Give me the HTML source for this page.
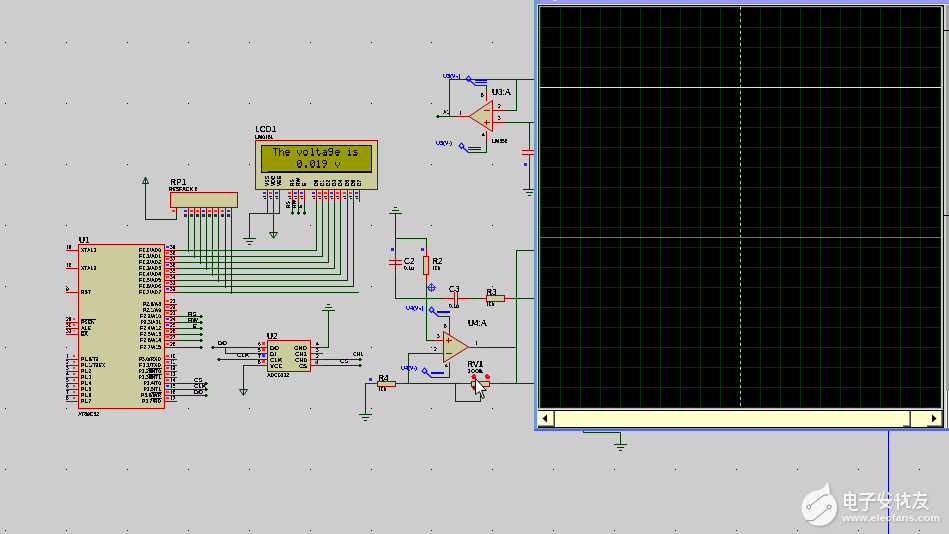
<!DOCTYPE html>
<html><head><meta charset="utf-8"><style>html,body{margin:0;padding:0;width:949px;height:534px;overflow:hidden;background:#cdcdcd;font-family:"Liberation Sans",sans-serif}</style></head>
<body><svg width="949" height="534" viewBox="0 0 949 534" style="position:absolute;left:0;top:0" font-family="Liberation Sans, sans-serif">
<defs><filter id="crisp2" x="0" y="0" width="949" height="534" filterUnits="userSpaceOnUse" color-interpolation-filters="sRGB"><feComponentTransfer><feFuncA type="discrete" tableValues="0 1 1"/></feComponentTransfer></filter><filter id="crisp" x="0" y="0" width="949" height="534" filterUnits="userSpaceOnUse" color-interpolation-filters="sRGB"><feComponentTransfer><feFuncA type="discrete" tableValues="0 0 1 1 1"/></feComponentTransfer></filter><pattern id="chk" width="2" height="2" patternUnits="userSpaceOnUse"><rect width="2" height="2" fill="#ffffff"/><rect width="1" height="1" fill="#ffffc8"/><rect x="1" y="1" width="1" height="1" fill="#ffffc8"/></pattern></defs>
<rect width="949" height="534" fill="#cdcdcd"/>
<g shape-rendering="crispEdges">
<rect x="5" y="42" width="1" height="1" fill="#101010"/>
<rect x="5" y="103" width="1" height="1" fill="#101010"/>
<rect x="5" y="164" width="1" height="1" fill="#101010"/>
<rect x="5" y="225" width="1" height="1" fill="#101010"/>
<rect x="5" y="286" width="1" height="1" fill="#101010"/>
<rect x="5" y="347" width="1" height="1" fill="#101010"/>
<rect x="5" y="408" width="1" height="1" fill="#101010"/>
<rect x="5" y="469" width="1" height="1" fill="#101010"/>
<rect x="5" y="530" width="1" height="1" fill="#101010"/>
<rect x="66" y="42" width="1" height="1" fill="#101010"/>
<rect x="66" y="103" width="1" height="1" fill="#101010"/>
<rect x="66" y="164" width="1" height="1" fill="#101010"/>
<rect x="66" y="225" width="1" height="1" fill="#101010"/>
<rect x="66" y="286" width="1" height="1" fill="#101010"/>
<rect x="66" y="347" width="1" height="1" fill="#101010"/>
<rect x="66" y="408" width="1" height="1" fill="#101010"/>
<rect x="66" y="469" width="1" height="1" fill="#101010"/>
<rect x="66" y="530" width="1" height="1" fill="#101010"/>
<rect x="127" y="42" width="1" height="1" fill="#101010"/>
<rect x="127" y="103" width="1" height="1" fill="#101010"/>
<rect x="127" y="164" width="1" height="1" fill="#101010"/>
<rect x="127" y="225" width="1" height="1" fill="#101010"/>
<rect x="127" y="286" width="1" height="1" fill="#101010"/>
<rect x="127" y="347" width="1" height="1" fill="#101010"/>
<rect x="127" y="408" width="1" height="1" fill="#101010"/>
<rect x="127" y="469" width="1" height="1" fill="#101010"/>
<rect x="127" y="530" width="1" height="1" fill="#101010"/>
<rect x="188" y="42" width="1" height="1" fill="#101010"/>
<rect x="188" y="103" width="1" height="1" fill="#101010"/>
<rect x="188" y="164" width="1" height="1" fill="#101010"/>
<rect x="188" y="225" width="1" height="1" fill="#101010"/>
<rect x="188" y="286" width="1" height="1" fill="#101010"/>
<rect x="188" y="347" width="1" height="1" fill="#101010"/>
<rect x="188" y="408" width="1" height="1" fill="#101010"/>
<rect x="188" y="469" width="1" height="1" fill="#101010"/>
<rect x="188" y="530" width="1" height="1" fill="#101010"/>
<rect x="249" y="42" width="1" height="1" fill="#101010"/>
<rect x="249" y="103" width="1" height="1" fill="#101010"/>
<rect x="249" y="164" width="1" height="1" fill="#101010"/>
<rect x="249" y="225" width="1" height="1" fill="#101010"/>
<rect x="249" y="286" width="1" height="1" fill="#101010"/>
<rect x="249" y="347" width="1" height="1" fill="#101010"/>
<rect x="249" y="408" width="1" height="1" fill="#101010"/>
<rect x="249" y="469" width="1" height="1" fill="#101010"/>
<rect x="249" y="530" width="1" height="1" fill="#101010"/>
<rect x="310" y="42" width="1" height="1" fill="#101010"/>
<rect x="310" y="103" width="1" height="1" fill="#101010"/>
<rect x="310" y="164" width="1" height="1" fill="#101010"/>
<rect x="310" y="225" width="1" height="1" fill="#101010"/>
<rect x="310" y="286" width="1" height="1" fill="#101010"/>
<rect x="310" y="347" width="1" height="1" fill="#101010"/>
<rect x="310" y="408" width="1" height="1" fill="#101010"/>
<rect x="310" y="469" width="1" height="1" fill="#101010"/>
<rect x="310" y="530" width="1" height="1" fill="#101010"/>
<rect x="371" y="42" width="1" height="1" fill="#101010"/>
<rect x="371" y="103" width="1" height="1" fill="#101010"/>
<rect x="371" y="164" width="1" height="1" fill="#101010"/>
<rect x="371" y="225" width="1" height="1" fill="#101010"/>
<rect x="371" y="286" width="1" height="1" fill="#101010"/>
<rect x="371" y="347" width="1" height="1" fill="#101010"/>
<rect x="371" y="408" width="1" height="1" fill="#101010"/>
<rect x="371" y="469" width="1" height="1" fill="#101010"/>
<rect x="371" y="530" width="1" height="1" fill="#101010"/>
<rect x="431" y="42" width="1" height="1" fill="#101010"/>
<rect x="431" y="103" width="1" height="1" fill="#101010"/>
<rect x="431" y="164" width="1" height="1" fill="#101010"/>
<rect x="431" y="225" width="1" height="1" fill="#101010"/>
<rect x="431" y="286" width="1" height="1" fill="#101010"/>
<rect x="431" y="347" width="1" height="1" fill="#101010"/>
<rect x="431" y="408" width="1" height="1" fill="#101010"/>
<rect x="431" y="469" width="1" height="1" fill="#101010"/>
<rect x="431" y="530" width="1" height="1" fill="#101010"/>
<rect x="492" y="42" width="1" height="1" fill="#101010"/>
<rect x="492" y="103" width="1" height="1" fill="#101010"/>
<rect x="492" y="164" width="1" height="1" fill="#101010"/>
<rect x="492" y="225" width="1" height="1" fill="#101010"/>
<rect x="492" y="286" width="1" height="1" fill="#101010"/>
<rect x="492" y="347" width="1" height="1" fill="#101010"/>
<rect x="492" y="408" width="1" height="1" fill="#101010"/>
<rect x="492" y="469" width="1" height="1" fill="#101010"/>
<rect x="492" y="530" width="1" height="1" fill="#101010"/>
<rect x="553" y="469" width="1" height="1" fill="#101010"/>
<rect x="553" y="530" width="1" height="1" fill="#101010"/>
<rect x="614" y="469" width="1" height="1" fill="#101010"/>
<rect x="614" y="530" width="1" height="1" fill="#101010"/>
<rect x="675" y="469" width="1" height="1" fill="#101010"/>
<rect x="675" y="530" width="1" height="1" fill="#101010"/>
<rect x="736" y="469" width="1" height="1" fill="#101010"/>
<rect x="736" y="530" width="1" height="1" fill="#101010"/>
<rect x="797" y="469" width="1" height="1" fill="#101010"/>
<rect x="797" y="530" width="1" height="1" fill="#101010"/>
<rect x="858" y="469" width="1" height="1" fill="#101010"/>
<rect x="858" y="530" width="1" height="1" fill="#101010"/>
<rect x="919" y="469" width="1" height="1" fill="#101010"/>
<rect x="919" y="530" width="1" height="1" fill="#101010"/>
<rect x="78" y="244" width="87" height="165" fill="#a80000"/>
<rect x="79" y="245" width="85" height="163" fill="#cbcb9b"/>
<rect x="66" y="250" width="12" height="1" fill="#a80000"/>
<rect x="66" y="268" width="12" height="1" fill="#a80000"/>
<rect x="66" y="292" width="12" height="1" fill="#a80000"/>
<rect x="66" y="322" width="12" height="1" fill="#a80000"/>
<rect x="73" y="318" width="2" height="2" fill="#ff2828"/>
<rect x="66" y="328" width="12" height="1" fill="#a80000"/>
<rect x="73" y="324" width="2" height="2" fill="#ff2828"/>
<rect x="66" y="334" width="12" height="1" fill="#a80000"/>
<rect x="73" y="330" width="2" height="2" fill="#a0a0a0"/>
<rect x="66" y="359" width="12" height="1" fill="#a80000"/>
<rect x="73" y="355" width="2" height="2" fill="#ff2828"/>
<rect x="66" y="365" width="12" height="1" fill="#a80000"/>
<rect x="73" y="361" width="2" height="2" fill="#ff2828"/>
<rect x="66" y="371" width="12" height="1" fill="#a80000"/>
<rect x="73" y="367" width="2" height="2" fill="#ff2828"/>
<rect x="66" y="377" width="12" height="1" fill="#a80000"/>
<rect x="73" y="373" width="2" height="2" fill="#ff2828"/>
<rect x="66" y="383" width="12" height="1" fill="#a80000"/>
<rect x="73" y="379" width="2" height="2" fill="#ff2828"/>
<rect x="66" y="389" width="12" height="1" fill="#a80000"/>
<rect x="73" y="385" width="2" height="2" fill="#ff2828"/>
<rect x="66" y="395" width="12" height="1" fill="#a80000"/>
<rect x="73" y="391" width="2" height="2" fill="#ff2828"/>
<rect x="66" y="401" width="12" height="1" fill="#a80000"/>
<rect x="73" y="397" width="2" height="2" fill="#ff2828"/>
<rect x="165" y="250" width="12" height="1" fill="#a80000"/>
<rect x="166" y="246" width="3" height="2" fill="#2828ff"/>
<rect x="165" y="256" width="12" height="1" fill="#a80000"/>
<rect x="166" y="252" width="3" height="2" fill="#ff2828"/>
<rect x="165" y="262" width="12" height="1" fill="#a80000"/>
<rect x="166" y="258" width="3" height="2" fill="#ff2828"/>
<rect x="165" y="268" width="12" height="1" fill="#a80000"/>
<rect x="166" y="264" width="3" height="2" fill="#2828ff"/>
<rect x="165" y="274" width="12" height="1" fill="#a80000"/>
<rect x="166" y="270" width="3" height="2" fill="#ff2828"/>
<rect x="165" y="280" width="12" height="1" fill="#a80000"/>
<rect x="166" y="276" width="3" height="2" fill="#ff2828"/>
<rect x="165" y="286" width="12" height="1" fill="#a80000"/>
<rect x="166" y="282" width="3" height="2" fill="#ff2828"/>
<rect x="165" y="292" width="12" height="1" fill="#a80000"/>
<rect x="166" y="288" width="3" height="2" fill="#2828ff"/>
<rect x="165" y="304" width="12" height="1" fill="#a80000"/>
<rect x="166" y="300" width="3" height="2" fill="#ff2828"/>
<rect x="165" y="310" width="12" height="1" fill="#a80000"/>
<rect x="166" y="306" width="3" height="2" fill="#ff2828"/>
<rect x="165" y="316" width="12" height="1" fill="#a80000"/>
<rect x="166" y="312" width="3" height="2" fill="#ff2828"/>
<rect x="165" y="322" width="12" height="1" fill="#a80000"/>
<rect x="166" y="318" width="3" height="2" fill="#2828ff"/>
<rect x="165" y="328" width="12" height="1" fill="#a80000"/>
<rect x="166" y="324" width="3" height="2" fill="#2828ff"/>
<rect x="165" y="334" width="12" height="1" fill="#a80000"/>
<rect x="166" y="330" width="3" height="2" fill="#ff2828"/>
<rect x="165" y="340" width="12" height="1" fill="#a80000"/>
<rect x="166" y="336" width="3" height="2" fill="#ff2828"/>
<rect x="165" y="347" width="12" height="1" fill="#a80000"/>
<rect x="166" y="343" width="3" height="2" fill="#ff2828"/>
<rect x="165" y="359" width="12" height="1" fill="#a80000"/>
<rect x="166" y="355" width="3" height="2" fill="#ff2828"/>
<rect x="165" y="365" width="12" height="1" fill="#a80000"/>
<rect x="166" y="361" width="3" height="2" fill="#ff2828"/>
<rect x="165" y="371" width="12" height="1" fill="#a80000"/>
<rect x="166" y="367" width="3" height="2" fill="#ff2828"/>
<rect x="165" y="377" width="12" height="1" fill="#a80000"/>
<rect x="166" y="373" width="3" height="2" fill="#ff2828"/>
<rect x="165" y="383" width="12" height="1" fill="#a80000"/>
<rect x="166" y="379" width="3" height="2" fill="#ff2828"/>
<rect x="165" y="389" width="12" height="1" fill="#a80000"/>
<rect x="166" y="385" width="3" height="2" fill="#2828ff"/>
<rect x="165" y="395" width="12" height="1" fill="#a80000"/>
<rect x="166" y="391" width="3" height="2" fill="#ff2828"/>
<rect x="165" y="401" width="12" height="1" fill="#a80000"/>
<rect x="166" y="397" width="3" height="2" fill="#ff2828"/>
<rect x="81" y="319" width="15" height="1" fill="#000"/>
<rect x="81" y="331" width="7" height="1" fill="#000"/>
<rect x="148" y="368" width="14" height="1" fill="#000"/>
<rect x="148" y="374" width="14" height="1" fill="#000"/>
<rect x="151" y="392" width="11" height="1" fill="#000"/>
<rect x="151" y="398" width="11" height="1" fill="#000"/>
<rect x="299" y="361" width="9" height="1" fill="#000"/>
<rect x="177" y="250" width="140" height="1" fill="#003c00"/>
<rect x="316" y="202" width="1" height="49" fill="#003c00"/>
<rect x="177" y="256" width="146" height="1" fill="#003c00"/>
<rect x="322" y="202" width="1" height="55" fill="#003c00"/>
<rect x="177" y="262" width="152" height="1" fill="#003c00"/>
<rect x="328" y="202" width="1" height="61" fill="#003c00"/>
<rect x="177" y="268" width="158" height="1" fill="#003c00"/>
<rect x="334" y="202" width="1" height="67" fill="#003c00"/>
<rect x="177" y="274" width="164" height="1" fill="#003c00"/>
<rect x="340" y="202" width="1" height="73" fill="#003c00"/>
<rect x="177" y="280" width="171" height="1" fill="#003c00"/>
<rect x="347" y="202" width="1" height="79" fill="#003c00"/>
<rect x="177" y="286" width="177" height="1" fill="#003c00"/>
<rect x="353" y="202" width="1" height="85" fill="#003c00"/>
<rect x="177" y="292" width="182" height="1" fill="#003c00"/>
<rect x="170" y="192" width="68" height="16" fill="#a80000"/>
<rect x="171" y="193" width="66" height="14" fill="#cbcb9b"/>
<rect x="188" y="208" width="1" height="6" fill="#a80000"/>
<rect x="188" y="214" width="1" height="38" fill="#003c00"/>
<rect x="184" y="210" width="3" height="2" fill="#2828ff"/>
<rect x="184" y="214" width="3" height="3" fill="#303030"/>
<rect x="194" y="208" width="1" height="6" fill="#a80000"/>
<rect x="194" y="214" width="1" height="44" fill="#003c00"/>
<rect x="190" y="210" width="3" height="2" fill="#ff2828"/>
<rect x="190" y="214" width="3" height="3" fill="#303030"/>
<rect x="200" y="208" width="1" height="6" fill="#a80000"/>
<rect x="200" y="214" width="1" height="50" fill="#003c00"/>
<rect x="196" y="210" width="3" height="2" fill="#ff2828"/>
<rect x="196" y="214" width="3" height="3" fill="#303030"/>
<rect x="206" y="208" width="1" height="6" fill="#a80000"/>
<rect x="206" y="214" width="1" height="56" fill="#003c00"/>
<rect x="202" y="210" width="3" height="2" fill="#2828ff"/>
<rect x="202" y="214" width="3" height="3" fill="#303030"/>
<rect x="212" y="208" width="1" height="6" fill="#a80000"/>
<rect x="212" y="214" width="1" height="62" fill="#003c00"/>
<rect x="208" y="210" width="3" height="2" fill="#ff2828"/>
<rect x="208" y="214" width="3" height="3" fill="#303030"/>
<rect x="218" y="208" width="1" height="6" fill="#a80000"/>
<rect x="218" y="214" width="1" height="68" fill="#003c00"/>
<rect x="214" y="210" width="3" height="2" fill="#ff2828"/>
<rect x="214" y="214" width="3" height="3" fill="#303030"/>
<rect x="225" y="208" width="1" height="6" fill="#a80000"/>
<rect x="225" y="214" width="1" height="74" fill="#003c00"/>
<rect x="221" y="210" width="3" height="2" fill="#ff2828"/>
<rect x="221" y="214" width="3" height="3" fill="#303030"/>
<rect x="231" y="208" width="1" height="6" fill="#a80000"/>
<rect x="231" y="214" width="1" height="80" fill="#003c00"/>
<rect x="227" y="210" width="3" height="2" fill="#2828ff"/>
<rect x="227" y="214" width="3" height="3" fill="#303030"/>
<rect x="176" y="208" width="1" height="6" fill="#a80000"/>
<rect x="176" y="214" width="1" height="6" fill="#003c00"/>
<rect x="145" y="219" width="32" height="1" fill="#003c00"/>
<rect x="145" y="177" width="1" height="43" fill="#003c00"/>
<polygon points="145.5,177 142.5,183.5 148.5,183.5" fill="none" stroke="#003c00" stroke-width="1" shape-rendering="geometricPrecision"/>
<rect x="172" y="210" width="3" height="2" fill="#ff2828"/>
<rect x="255" y="140" width="123" height="50" fill="#a80000"/>
<rect x="256" y="141" width="121" height="48" fill="#cbcb9b"/>
<rect x="261" y="145" width="111" height="28" fill="#000"/>
<rect x="262" y="146" width="109" height="25" fill="#999900"/>
<rect x="262" y="171" width="6" height="1" fill="#999900"/>
<rect x="273" y="148" width="1" height="1" fill="#000"/>
<rect x="274" y="148" width="1" height="1" fill="#000"/>
<rect x="275" y="148" width="1" height="1" fill="#000"/>
<rect x="276" y="148" width="1" height="1" fill="#000"/>
<rect x="277" y="148" width="1" height="1" fill="#000"/>
<rect x="275" y="149" width="1" height="1" fill="#000"/>
<rect x="275" y="150" width="1" height="1" fill="#000"/>
<rect x="275" y="151" width="1" height="1" fill="#000"/>
<rect x="275" y="152" width="1" height="1" fill="#000"/>
<rect x="275" y="153" width="1" height="1" fill="#000"/>
<rect x="275" y="154" width="1" height="2" fill="#000"/>
<rect x="279" y="148" width="1" height="1" fill="#000"/>
<rect x="279" y="149" width="1" height="1" fill="#000"/>
<rect x="279" y="150" width="1" height="1" fill="#000"/>
<rect x="281" y="150" width="1" height="1" fill="#000"/>
<rect x="282" y="150" width="1" height="1" fill="#000"/>
<rect x="279" y="151" width="1" height="1" fill="#000"/>
<rect x="280" y="151" width="1" height="1" fill="#000"/>
<rect x="283" y="151" width="1" height="1" fill="#000"/>
<rect x="279" y="152" width="1" height="1" fill="#000"/>
<rect x="283" y="152" width="1" height="1" fill="#000"/>
<rect x="279" y="153" width="1" height="1" fill="#000"/>
<rect x="283" y="153" width="1" height="1" fill="#000"/>
<rect x="279" y="154" width="1" height="2" fill="#000"/>
<rect x="283" y="154" width="1" height="2" fill="#000"/>
<rect x="286" y="150" width="1" height="1" fill="#000"/>
<rect x="287" y="150" width="1" height="1" fill="#000"/>
<rect x="288" y="150" width="1" height="1" fill="#000"/>
<rect x="285" y="151" width="1" height="1" fill="#000"/>
<rect x="289" y="151" width="1" height="1" fill="#000"/>
<rect x="285" y="152" width="1" height="1" fill="#000"/>
<rect x="286" y="152" width="1" height="1" fill="#000"/>
<rect x="287" y="152" width="1" height="1" fill="#000"/>
<rect x="288" y="152" width="1" height="1" fill="#000"/>
<rect x="289" y="152" width="1" height="1" fill="#000"/>
<rect x="285" y="153" width="1" height="1" fill="#000"/>
<rect x="286" y="154" width="1" height="2" fill="#000"/>
<rect x="287" y="154" width="1" height="2" fill="#000"/>
<rect x="288" y="154" width="1" height="2" fill="#000"/>
<rect x="297" y="150" width="1" height="1" fill="#000"/>
<rect x="301" y="150" width="1" height="1" fill="#000"/>
<rect x="297" y="151" width="1" height="1" fill="#000"/>
<rect x="301" y="151" width="1" height="1" fill="#000"/>
<rect x="297" y="152" width="1" height="1" fill="#000"/>
<rect x="301" y="152" width="1" height="1" fill="#000"/>
<rect x="298" y="153" width="1" height="1" fill="#000"/>
<rect x="300" y="153" width="1" height="1" fill="#000"/>
<rect x="299" y="154" width="1" height="2" fill="#000"/>
<rect x="304" y="150" width="1" height="1" fill="#000"/>
<rect x="305" y="150" width="1" height="1" fill="#000"/>
<rect x="306" y="150" width="1" height="1" fill="#000"/>
<rect x="303" y="151" width="1" height="1" fill="#000"/>
<rect x="307" y="151" width="1" height="1" fill="#000"/>
<rect x="303" y="152" width="1" height="1" fill="#000"/>
<rect x="307" y="152" width="1" height="1" fill="#000"/>
<rect x="303" y="153" width="1" height="1" fill="#000"/>
<rect x="307" y="153" width="1" height="1" fill="#000"/>
<rect x="304" y="154" width="1" height="2" fill="#000"/>
<rect x="305" y="154" width="1" height="2" fill="#000"/>
<rect x="306" y="154" width="1" height="2" fill="#000"/>
<rect x="311" y="148" width="1" height="1" fill="#000"/>
<rect x="312" y="148" width="1" height="1" fill="#000"/>
<rect x="312" y="149" width="1" height="1" fill="#000"/>
<rect x="312" y="150" width="1" height="1" fill="#000"/>
<rect x="312" y="151" width="1" height="1" fill="#000"/>
<rect x="312" y="152" width="1" height="1" fill="#000"/>
<rect x="312" y="153" width="1" height="1" fill="#000"/>
<rect x="311" y="154" width="1" height="2" fill="#000"/>
<rect x="312" y="154" width="1" height="2" fill="#000"/>
<rect x="313" y="154" width="1" height="2" fill="#000"/>
<rect x="317" y="148" width="1" height="1" fill="#000"/>
<rect x="317" y="149" width="1" height="1" fill="#000"/>
<rect x="316" y="150" width="1" height="1" fill="#000"/>
<rect x="317" y="150" width="1" height="1" fill="#000"/>
<rect x="318" y="150" width="1" height="1" fill="#000"/>
<rect x="317" y="151" width="1" height="1" fill="#000"/>
<rect x="317" y="152" width="1" height="1" fill="#000"/>
<rect x="317" y="153" width="1" height="1" fill="#000"/>
<rect x="320" y="153" width="1" height="1" fill="#000"/>
<rect x="318" y="154" width="1" height="2" fill="#000"/>
<rect x="319" y="154" width="1" height="2" fill="#000"/>
<rect x="323" y="150" width="1" height="1" fill="#000"/>
<rect x="324" y="150" width="1" height="1" fill="#000"/>
<rect x="325" y="150" width="1" height="1" fill="#000"/>
<rect x="326" y="151" width="1" height="1" fill="#000"/>
<rect x="323" y="152" width="1" height="1" fill="#000"/>
<rect x="324" y="152" width="1" height="1" fill="#000"/>
<rect x="325" y="152" width="1" height="1" fill="#000"/>
<rect x="326" y="152" width="1" height="1" fill="#000"/>
<rect x="322" y="153" width="1" height="1" fill="#000"/>
<rect x="326" y="153" width="1" height="1" fill="#000"/>
<rect x="323" y="154" width="1" height="2" fill="#000"/>
<rect x="324" y="154" width="1" height="2" fill="#000"/>
<rect x="325" y="154" width="1" height="2" fill="#000"/>
<rect x="326" y="154" width="1" height="2" fill="#000"/>
<rect x="329" y="148" width="1" height="1" fill="#000"/>
<rect x="330" y="148" width="1" height="1" fill="#000"/>
<rect x="331" y="148" width="1" height="1" fill="#000"/>
<rect x="332" y="148" width="1" height="1" fill="#000"/>
<rect x="328" y="149" width="1" height="1" fill="#000"/>
<rect x="332" y="149" width="1" height="1" fill="#000"/>
<rect x="328" y="150" width="1" height="1" fill="#000"/>
<rect x="332" y="150" width="1" height="1" fill="#000"/>
<rect x="329" y="151" width="1" height="1" fill="#000"/>
<rect x="330" y="151" width="1" height="1" fill="#000"/>
<rect x="331" y="151" width="1" height="1" fill="#000"/>
<rect x="332" y="151" width="1" height="1" fill="#000"/>
<rect x="332" y="152" width="1" height="1" fill="#000"/>
<rect x="332" y="153" width="1" height="1" fill="#000"/>
<rect x="329" y="154" width="1" height="2" fill="#000"/>
<rect x="330" y="154" width="1" height="2" fill="#000"/>
<rect x="331" y="154" width="1" height="2" fill="#000"/>
<rect x="336" y="150" width="1" height="1" fill="#000"/>
<rect x="337" y="150" width="1" height="1" fill="#000"/>
<rect x="338" y="150" width="1" height="1" fill="#000"/>
<rect x="335" y="151" width="1" height="1" fill="#000"/>
<rect x="339" y="151" width="1" height="1" fill="#000"/>
<rect x="335" y="152" width="1" height="1" fill="#000"/>
<rect x="336" y="152" width="1" height="1" fill="#000"/>
<rect x="337" y="152" width="1" height="1" fill="#000"/>
<rect x="338" y="152" width="1" height="1" fill="#000"/>
<rect x="339" y="152" width="1" height="1" fill="#000"/>
<rect x="335" y="153" width="1" height="1" fill="#000"/>
<rect x="336" y="154" width="1" height="2" fill="#000"/>
<rect x="337" y="154" width="1" height="2" fill="#000"/>
<rect x="338" y="154" width="1" height="2" fill="#000"/>
<rect x="349" y="148" width="1" height="1" fill="#000"/>
<rect x="348" y="150" width="1" height="1" fill="#000"/>
<rect x="349" y="150" width="1" height="1" fill="#000"/>
<rect x="349" y="151" width="1" height="1" fill="#000"/>
<rect x="349" y="152" width="1" height="1" fill="#000"/>
<rect x="349" y="153" width="1" height="1" fill="#000"/>
<rect x="348" y="154" width="1" height="2" fill="#000"/>
<rect x="349" y="154" width="1" height="2" fill="#000"/>
<rect x="350" y="154" width="1" height="2" fill="#000"/>
<rect x="354" y="150" width="1" height="1" fill="#000"/>
<rect x="355" y="150" width="1" height="1" fill="#000"/>
<rect x="356" y="150" width="1" height="1" fill="#000"/>
<rect x="353" y="151" width="1" height="1" fill="#000"/>
<rect x="354" y="152" width="1" height="1" fill="#000"/>
<rect x="355" y="152" width="1" height="1" fill="#000"/>
<rect x="356" y="152" width="1" height="1" fill="#000"/>
<rect x="357" y="153" width="1" height="1" fill="#000"/>
<rect x="353" y="154" width="1" height="2" fill="#000"/>
<rect x="354" y="154" width="1" height="2" fill="#000"/>
<rect x="355" y="154" width="1" height="2" fill="#000"/>
<rect x="356" y="154" width="1" height="2" fill="#000"/>
<rect x="298" y="160" width="1" height="1" fill="#000"/>
<rect x="299" y="160" width="1" height="1" fill="#000"/>
<rect x="300" y="160" width="1" height="1" fill="#000"/>
<rect x="297" y="161" width="1" height="1" fill="#000"/>
<rect x="301" y="161" width="1" height="1" fill="#000"/>
<rect x="297" y="162" width="1" height="1" fill="#000"/>
<rect x="300" y="162" width="1" height="1" fill="#000"/>
<rect x="301" y="162" width="1" height="1" fill="#000"/>
<rect x="297" y="163" width="1" height="1" fill="#000"/>
<rect x="299" y="163" width="1" height="1" fill="#000"/>
<rect x="301" y="163" width="1" height="1" fill="#000"/>
<rect x="297" y="164" width="1" height="1" fill="#000"/>
<rect x="298" y="164" width="1" height="1" fill="#000"/>
<rect x="301" y="164" width="1" height="1" fill="#000"/>
<rect x="297" y="165" width="1" height="1" fill="#000"/>
<rect x="301" y="165" width="1" height="1" fill="#000"/>
<rect x="298" y="166" width="1" height="2" fill="#000"/>
<rect x="299" y="166" width="1" height="2" fill="#000"/>
<rect x="300" y="166" width="1" height="2" fill="#000"/>
<rect x="305" y="165" width="1" height="1" fill="#000"/>
<rect x="306" y="165" width="1" height="1" fill="#000"/>
<rect x="305" y="166" width="1" height="2" fill="#000"/>
<rect x="306" y="166" width="1" height="2" fill="#000"/>
<rect x="311" y="160" width="1" height="1" fill="#000"/>
<rect x="312" y="160" width="1" height="1" fill="#000"/>
<rect x="313" y="160" width="1" height="1" fill="#000"/>
<rect x="310" y="161" width="1" height="1" fill="#000"/>
<rect x="314" y="161" width="1" height="1" fill="#000"/>
<rect x="310" y="162" width="1" height="1" fill="#000"/>
<rect x="313" y="162" width="1" height="1" fill="#000"/>
<rect x="314" y="162" width="1" height="1" fill="#000"/>
<rect x="310" y="163" width="1" height="1" fill="#000"/>
<rect x="312" y="163" width="1" height="1" fill="#000"/>
<rect x="314" y="163" width="1" height="1" fill="#000"/>
<rect x="310" y="164" width="1" height="1" fill="#000"/>
<rect x="311" y="164" width="1" height="1" fill="#000"/>
<rect x="314" y="164" width="1" height="1" fill="#000"/>
<rect x="310" y="165" width="1" height="1" fill="#000"/>
<rect x="314" y="165" width="1" height="1" fill="#000"/>
<rect x="311" y="166" width="1" height="2" fill="#000"/>
<rect x="312" y="166" width="1" height="2" fill="#000"/>
<rect x="313" y="166" width="1" height="2" fill="#000"/>
<rect x="318" y="160" width="1" height="1" fill="#000"/>
<rect x="317" y="161" width="1" height="1" fill="#000"/>
<rect x="318" y="161" width="1" height="1" fill="#000"/>
<rect x="318" y="162" width="1" height="1" fill="#000"/>
<rect x="318" y="163" width="1" height="1" fill="#000"/>
<rect x="318" y="164" width="1" height="1" fill="#000"/>
<rect x="318" y="165" width="1" height="1" fill="#000"/>
<rect x="317" y="166" width="1" height="2" fill="#000"/>
<rect x="318" y="166" width="1" height="2" fill="#000"/>
<rect x="319" y="166" width="1" height="2" fill="#000"/>
<rect x="323" y="160" width="1" height="1" fill="#000"/>
<rect x="324" y="160" width="1" height="1" fill="#000"/>
<rect x="325" y="160" width="1" height="1" fill="#000"/>
<rect x="322" y="161" width="1" height="1" fill="#000"/>
<rect x="326" y="161" width="1" height="1" fill="#000"/>
<rect x="322" y="162" width="1" height="1" fill="#000"/>
<rect x="326" y="162" width="1" height="1" fill="#000"/>
<rect x="323" y="163" width="1" height="1" fill="#000"/>
<rect x="324" y="163" width="1" height="1" fill="#000"/>
<rect x="325" y="163" width="1" height="1" fill="#000"/>
<rect x="326" y="163" width="1" height="1" fill="#000"/>
<rect x="326" y="164" width="1" height="1" fill="#000"/>
<rect x="325" y="165" width="1" height="1" fill="#000"/>
<rect x="323" y="166" width="1" height="2" fill="#000"/>
<rect x="324" y="166" width="1" height="2" fill="#000"/>
<rect x="335" y="162" width="1" height="1" fill="#000"/>
<rect x="339" y="162" width="1" height="1" fill="#000"/>
<rect x="335" y="163" width="1" height="1" fill="#000"/>
<rect x="339" y="163" width="1" height="1" fill="#000"/>
<rect x="335" y="164" width="1" height="1" fill="#000"/>
<rect x="339" y="164" width="1" height="1" fill="#000"/>
<rect x="336" y="165" width="1" height="1" fill="#000"/>
<rect x="338" y="165" width="1" height="1" fill="#000"/>
<rect x="337" y="166" width="1" height="2" fill="#000"/>
<rect x="267" y="190" width="1" height="12" fill="#a80000"/>
<rect x="263" y="192" width="3" height="2" fill="#2828ff"/>
<rect x="263" y="196" width="3" height="1" fill="#000"/>
<rect x="264" y="198" width="2" height="1" fill="#000"/>
<rect x="273" y="190" width="1" height="12" fill="#a80000"/>
<rect x="269" y="192" width="3" height="2" fill="#ff2828"/>
<rect x="269" y="196" width="3" height="1" fill="#000"/>
<rect x="270" y="198" width="2" height="1" fill="#000"/>
<rect x="279" y="190" width="1" height="12" fill="#a80000"/>
<rect x="275" y="192" width="3" height="2" fill="#2828ff"/>
<rect x="275" y="196" width="3" height="1" fill="#000"/>
<rect x="276" y="198" width="2" height="1" fill="#000"/>
<rect x="292" y="190" width="1" height="12" fill="#a80000"/>
<rect x="288" y="192" width="3" height="2" fill="#ff2828"/>
<rect x="288" y="196" width="3" height="1" fill="#000"/>
<rect x="289" y="198" width="2" height="1" fill="#000"/>
<rect x="298" y="190" width="1" height="12" fill="#a80000"/>
<rect x="294" y="192" width="3" height="2" fill="#2828ff"/>
<rect x="294" y="196" width="3" height="1" fill="#000"/>
<rect x="295" y="198" width="2" height="1" fill="#000"/>
<rect x="304" y="190" width="1" height="12" fill="#a80000"/>
<rect x="300" y="192" width="3" height="2" fill="#2828ff"/>
<rect x="300" y="196" width="3" height="1" fill="#000"/>
<rect x="301" y="198" width="2" height="1" fill="#000"/>
<rect x="316" y="190" width="1" height="12" fill="#a80000"/>
<rect x="312" y="192" width="3" height="2" fill="#2828ff"/>
<rect x="312" y="196" width="3" height="1" fill="#000"/>
<rect x="313" y="198" width="2" height="1" fill="#000"/>
<rect x="322" y="190" width="1" height="12" fill="#a80000"/>
<rect x="318" y="192" width="3" height="2" fill="#ff2828"/>
<rect x="318" y="196" width="3" height="1" fill="#000"/>
<rect x="319" y="198" width="2" height="1" fill="#000"/>
<rect x="328" y="190" width="1" height="12" fill="#a80000"/>
<rect x="324" y="192" width="3" height="2" fill="#ff2828"/>
<rect x="324" y="196" width="3" height="1" fill="#000"/>
<rect x="325" y="198" width="2" height="1" fill="#000"/>
<rect x="334" y="190" width="1" height="12" fill="#a80000"/>
<rect x="330" y="192" width="3" height="2" fill="#2828ff"/>
<rect x="330" y="196" width="3" height="1" fill="#000"/>
<rect x="331" y="198" width="2" height="1" fill="#000"/>
<rect x="340" y="190" width="1" height="12" fill="#a80000"/>
<rect x="336" y="192" width="3" height="2" fill="#ff2828"/>
<rect x="336" y="196" width="3" height="1" fill="#000"/>
<rect x="337" y="198" width="2" height="1" fill="#000"/>
<rect x="347" y="190" width="1" height="12" fill="#a80000"/>
<rect x="343" y="192" width="3" height="2" fill="#ff2828"/>
<rect x="343" y="196" width="3" height="1" fill="#000"/>
<rect x="344" y="198" width="2" height="1" fill="#000"/>
<rect x="353" y="190" width="1" height="12" fill="#a80000"/>
<rect x="349" y="192" width="3" height="2" fill="#ff2828"/>
<rect x="349" y="196" width="3" height="1" fill="#000"/>
<rect x="350" y="198" width="2" height="1" fill="#000"/>
<rect x="359" y="190" width="1" height="12" fill="#a80000"/>
<rect x="355" y="192" width="3" height="2" fill="#2828ff"/>
<rect x="355" y="196" width="3" height="1" fill="#000"/>
<rect x="356" y="198" width="2" height="1" fill="#000"/>
<rect x="267" y="202" width="1" height="12" fill="#003c00"/>
<rect x="279" y="202" width="1" height="12" fill="#003c00"/>
<rect x="249" y="213" width="31" height="1" fill="#003c00"/>
<rect x="273" y="202" width="1" height="31" fill="#003c00"/>
<polygon points="269.5,232.5 277.5,232.5 273.5,238.5" fill="none" stroke="#003c00" stroke-width="1" shape-rendering="geometricPrecision"/>
<rect x="273" y="233" width="1" height="5" fill="#003c00"/>
<rect x="249" y="213" width="1" height="26" fill="#003c00"/>
<rect x="243" y="238" width="13" height="1" fill="#003c00"/>
<rect x="246" y="241" width="7" height="1" fill="#003c00"/>
<rect x="248" y="244" width="3" height="1" fill="#003c00"/>
<rect x="292" y="202" width="1" height="12" fill="#003c00"/>
<rect x="292" y="211" width="1" height="4" fill="#003c00"/>
<rect x="291" y="212" width="1" height="2" fill="#003c00"/>
<rect x="293" y="212" width="1" height="2" fill="#003c00"/>
<rect x="298" y="202" width="1" height="12" fill="#003c00"/>
<rect x="298" y="211" width="1" height="4" fill="#003c00"/>
<rect x="297" y="212" width="1" height="2" fill="#003c00"/>
<rect x="299" y="212" width="1" height="2" fill="#003c00"/>
<rect x="304" y="202" width="1" height="12" fill="#003c00"/>
<rect x="304" y="211" width="1" height="4" fill="#003c00"/>
<rect x="303" y="212" width="1" height="2" fill="#003c00"/>
<rect x="305" y="212" width="1" height="2" fill="#003c00"/>
<rect x="177" y="316" width="24" height="1" fill="#003c00"/>
<rect x="199" y="316" width="4" height="1" fill="#003c00"/>
<rect x="200" y="315" width="2" height="1" fill="#003c00"/>
<rect x="200" y="317" width="2" height="1" fill="#003c00"/>
<rect x="177" y="322" width="24" height="1" fill="#003c00"/>
<rect x="199" y="322" width="4" height="1" fill="#003c00"/>
<rect x="200" y="321" width="2" height="1" fill="#003c00"/>
<rect x="200" y="323" width="2" height="1" fill="#003c00"/>
<rect x="177" y="328" width="24" height="1" fill="#003c00"/>
<rect x="199" y="328" width="4" height="1" fill="#003c00"/>
<rect x="200" y="327" width="2" height="1" fill="#003c00"/>
<rect x="200" y="329" width="2" height="1" fill="#003c00"/>
<rect x="177" y="334" width="24" height="1" fill="#003c00"/>
<rect x="199" y="334" width="4" height="1" fill="#003c00"/>
<rect x="200" y="333" width="2" height="1" fill="#003c00"/>
<rect x="200" y="335" width="2" height="1" fill="#003c00"/>
<rect x="177" y="340" width="24" height="1" fill="#003c00"/>
<rect x="199" y="340" width="4" height="1" fill="#003c00"/>
<rect x="200" y="339" width="2" height="1" fill="#003c00"/>
<rect x="200" y="341" width="2" height="1" fill="#003c00"/>
<rect x="177" y="347" width="24" height="1" fill="#003c00"/>
<rect x="199" y="347" width="4" height="1" fill="#003c00"/>
<rect x="200" y="346" width="2" height="1" fill="#003c00"/>
<rect x="200" y="348" width="2" height="1" fill="#003c00"/>
<rect x="177" y="383" width="29" height="1" fill="#003c00"/>
<rect x="204" y="383" width="4" height="1" fill="#003c00"/>
<rect x="205" y="382" width="2" height="1" fill="#003c00"/>
<rect x="205" y="384" width="2" height="1" fill="#003c00"/>
<rect x="177" y="389" width="29" height="1" fill="#003c00"/>
<rect x="204" y="389" width="4" height="1" fill="#003c00"/>
<rect x="205" y="388" width="2" height="1" fill="#003c00"/>
<rect x="205" y="390" width="2" height="1" fill="#003c00"/>
<rect x="177" y="395" width="29" height="1" fill="#003c00"/>
<rect x="204" y="395" width="4" height="1" fill="#003c00"/>
<rect x="205" y="394" width="2" height="1" fill="#003c00"/>
<rect x="205" y="396" width="2" height="1" fill="#003c00"/>
<rect x="267" y="340" width="44" height="32" fill="#a80000"/>
<rect x="268" y="341" width="42" height="30" fill="#cbcb9b"/>
<rect x="255" y="347" width="12" height="1" fill="#a80000"/>
<rect x="262" y="342" width="3" height="3" fill="#ff2828"/>
<rect x="255" y="353" width="12" height="1" fill="#a80000"/>
<rect x="262" y="348" width="3" height="3" fill="#ff2828"/>
<rect x="255" y="359" width="12" height="1" fill="#a80000"/>
<rect x="262" y="354" width="3" height="3" fill="#2828ff"/>
<rect x="255" y="365" width="12" height="1" fill="#a80000"/>
<rect x="262" y="360" width="3" height="3" fill="#ff2828"/>
<rect x="311" y="347" width="12" height="1" fill="#a80000"/>
<rect x="311" y="353" width="12" height="1" fill="#a80000"/>
<rect x="311" y="359" width="12" height="1" fill="#a80000"/>
<rect x="311" y="365" width="12" height="1" fill="#a80000"/>
<rect x="212" y="347" width="43" height="1" fill="#003c00"/>
<rect x="211" y="347" width="4" height="1" fill="#003c00"/>
<rect x="212" y="346" width="2" height="1" fill="#003c00"/>
<rect x="212" y="348" width="2" height="1" fill="#003c00"/>
<rect x="225" y="347" width="1" height="7" fill="#003c00"/>
<rect x="225" y="353" width="30" height="1" fill="#003c00"/>
<rect x="218" y="359" width="37" height="1" fill="#003c00"/>
<rect x="217" y="359" width="4" height="1" fill="#003c00"/>
<rect x="218" y="358" width="2" height="1" fill="#003c00"/>
<rect x="218" y="360" width="2" height="1" fill="#003c00"/>
<rect x="243" y="365" width="12" height="1" fill="#003c00"/>
<rect x="243" y="365" width="1" height="25" fill="#003c00"/>
<polygon points="239.5,389.5 247.5,389.5 243.5,395.5" fill="none" stroke="#003c00" stroke-width="1" shape-rendering="geometricPrecision"/>
<rect x="243" y="390" width="1" height="5" fill="#003c00"/>
<rect x="323" y="347" width="6" height="1" fill="#003c00"/>
<rect x="328" y="310" width="1" height="38" fill="#003c00"/>
<rect x="322" y="310" width="13" height="1" fill="#003c00"/>
<rect x="325" y="307" width="7" height="1" fill="#003c00"/>
<rect x="327" y="304" width="3" height="1" fill="#003c00"/>
<rect x="323" y="359" width="37" height="1" fill="#003c00"/>
<rect x="358" y="359" width="4" height="1" fill="#003c00"/>
<rect x="359" y="358" width="2" height="1" fill="#003c00"/>
<rect x="359" y="360" width="2" height="1" fill="#003c00"/>
<rect x="323" y="365" width="37" height="1" fill="#003c00"/>
<rect x="358" y="365" width="4" height="1" fill="#003c00"/>
<rect x="359" y="364" width="2" height="1" fill="#003c00"/>
<rect x="359" y="366" width="2" height="1" fill="#003c00"/>
<rect x="315" y="361" width="3" height="3" fill="#ff2828"/>
<rect x="395" y="213" width="1" height="86" fill="#003c00"/>
<rect x="389" y="213" width="13" height="1" fill="#003c00"/>
<rect x="392" y="210" width="7" height="1" fill="#003c00"/>
<rect x="394" y="207" width="3" height="1" fill="#003c00"/>
<rect x="395" y="238" width="32" height="1" fill="#003c00"/>
<rect x="395" y="248" width="1" height="12" fill="#a80000"/>
<rect x="389" y="260" width="13" height="1" fill="#a80000"/>
<rect x="389" y="264" width="13" height="1" fill="#a80000"/>
<rect x="395" y="265" width="1" height="11" fill="#a80000"/>
<rect x="426" y="239" width="1" height="9" fill="#003c00"/>
<rect x="426" y="248" width="1" height="8" fill="#a80000"/>
<rect x="423" y="256" width="6" height="19" fill="#a80000"/>
<rect x="424" y="257" width="4" height="17" fill="#cbcb9b"/>
<rect x="426" y="275" width="1" height="9" fill="#a80000"/>
<rect x="426" y="284" width="1" height="57" fill="#003c00"/>
<rect x="391" y="248" width="3" height="3" fill="#2828ff"/>
<rect x="421" y="248" width="3" height="3" fill="#2828ff"/>
<rect x="395" y="298" width="48" height="1" fill="#003c00"/>
<rect x="443" y="298" width="11" height="1" fill="#a80000"/>
<rect x="454" y="292" width="1" height="14" fill="#a80000"/>
<rect x="457" y="292" width="1" height="14" fill="#a80000"/>
<rect x="458" y="298" width="12" height="1" fill="#a80000"/>
<rect x="470" y="298" width="11" height="1" fill="#003c00"/>
<rect x="481" y="298" width="5" height="1" fill="#a80000"/>
<rect x="486" y="295" width="19" height="7" fill="#a80000"/>
<rect x="487" y="296" width="17" height="5" fill="#cbcb9b"/>
<rect x="505" y="298" width="7" height="1" fill="#a80000"/>
<rect x="512" y="298" width="23" height="1" fill="#003c00"/>
<rect x="516" y="250" width="1" height="134" fill="#003c00"/>
<rect x="516" y="250" width="19" height="1" fill="#003c00"/>
<g stroke="#2828ff" fill="none"><circle cx="431.5" cy="287.5" r="3"/><path d="M431.5 283v9M427 287.5h9"/></g>
<polygon points="443.5,331.5 443.5,362.5 468.5,347" fill="#cbcb9b" stroke="#a80000" stroke-width="1" shape-rendering="geometricPrecision"/>
<rect x="446" y="340" width="6" height="1" fill="#a80000"/>
<rect x="448" y="338" width="1" height="5" fill="#a80000"/>
<rect x="446" y="353" width="6" height="1" fill="#a80000"/>
<rect x="426" y="340" width="8" height="1" fill="#003c00"/>
<rect x="434" y="340" width="9" height="1" fill="#a80000"/>
<rect x="408" y="353" width="26" height="1" fill="#003c00"/>
<rect x="434" y="353" width="9" height="1" fill="#a80000"/>
<rect x="408" y="353" width="1" height="31" fill="#003c00"/>
<rect x="469" y="347" width="12" height="1" fill="#a80000"/>
<rect x="481" y="347" width="36" height="1" fill="#003c00"/>
<rect x="449" y="316" width="1" height="6" fill="#003c00"/>
<rect x="449" y="322" width="1" height="13" fill="#a80000"/>
<rect x="438" y="316" width="12" height="1" fill="#003c00"/>
<rect x="449" y="362" width="1" height="10" fill="#a80000"/>
<rect x="449" y="372" width="1" height="6" fill="#003c00"/>
<rect x="431" y="377" width="19" height="1" fill="#003c00"/>
<g stroke="#0000ff" fill="none" stroke-width="1.1" shape-rendering="geometricPrecision"><path d="M433.0 311.5 L438.5 316.5"/><path d="M429.0 310 L431.5 307 L434.0 310 L431.5 312.5 Z"/></g>
<rect x="437" y="311" width="13" height="2" fill="#0000ff"/>
<g stroke="#0000ff" fill="none" stroke-width="1.1" shape-rendering="geometricPrecision"><path d="M426.0 372.5 L431.5 377.5"/><path d="M422.0 371 L424.5 368 L427.0 371 L424.5 373.5 Z"/></g>
<rect x="431" y="372" width="13" height="2" fill="#0000ff"/>
<rect x="365" y="383" width="6" height="1" fill="#003c00"/>
<rect x="371" y="383" width="6" height="1" fill="#a80000"/>
<rect x="377" y="381" width="19" height="6" fill="#a80000"/>
<rect x="378" y="382" width="17" height="4" fill="#cbcb9b"/>
<rect x="396" y="383" width="7" height="1" fill="#a80000"/>
<rect x="403" y="383" width="58" height="1" fill="#003c00"/>
<rect x="461" y="383" width="10" height="1" fill="#a80000"/>
<rect x="471" y="381" width="19" height="6" fill="#a80000"/>
<rect x="472" y="382" width="17" height="4" fill="#cbcb9b"/>
<rect x="490" y="383" width="11" height="1" fill="#a80000"/>
<rect x="501" y="383" width="34" height="1" fill="#003c00"/>
<rect x="365" y="383" width="1" height="32" fill="#003c00"/>
<rect x="359" y="414" width="13" height="1" fill="#003c00"/>
<rect x="362" y="417" width="7" height="1" fill="#003c00"/>
<rect x="364" y="420" width="3" height="1" fill="#003c00"/>
<rect x="369" y="378" width="3" height="3" fill="#2828ff"/>
<rect x="455" y="383" width="1" height="19" fill="#003c00"/>
<rect x="455" y="401" width="26" height="1" fill="#003c00"/>
<rect x="480" y="396" width="1" height="6" fill="#003c00"/>
<rect x="480" y="390" width="1" height="6" fill="#a80000"/>
<polygon points="471.5,386.5 476.5,386.5 474,391" fill="#a80000" stroke="none" stroke-width="1" shape-rendering="geometricPrecision"/>
<circle cx="473.8" cy="376.6" r="2.4" fill="#ff1010"/><circle cx="487.4" cy="376.6" r="2.4" fill="#ff1010"/>
<rect x="472" y="377" width="4" height="1" fill="#700000"/>
<rect x="486" y="377" width="4" height="1" fill="#700000"/>
<path d="M475.5 378.5 v16 l4 -3 l3 7 l2 -1 l-3 -7 h5 z" fill="#fff" stroke="#000" stroke-width="1" shape-rendering="geometricPrecision" stroke-linejoin="round"/>
<polygon points="492.5,100.5 492.5,131.5 469,116.5" fill="#cbcb9b" stroke="#a80000" stroke-width="1" shape-rendering="geometricPrecision"/>
<rect x="484" y="110" width="6" height="1" fill="#a80000"/>
<rect x="484" y="122" width="6" height="1" fill="#a80000"/>
<rect x="486" y="120" width="1" height="5" fill="#a80000"/>
<rect x="455" y="116" width="14" height="1" fill="#a80000"/>
<rect x="438" y="116" width="17" height="1" fill="#003c00"/>
<rect x="436" y="116" width="4" height="1" fill="#003c00"/>
<rect x="437" y="115" width="2" height="1" fill="#003c00"/>
<rect x="437" y="117" width="2" height="1" fill="#003c00"/>
<rect x="449" y="79" width="1" height="38" fill="#003c00"/>
<rect x="449" y="79" width="86" height="1" fill="#003c00"/>
<rect x="493" y="110" width="12" height="1" fill="#a80000"/>
<rect x="505" y="110" width="12" height="1" fill="#003c00"/>
<rect x="516" y="79" width="1" height="32" fill="#003c00"/>
<rect x="493" y="122" width="12" height="1" fill="#a80000"/>
<rect x="505" y="122" width="30" height="1" fill="#003c00"/>
<rect x="529" y="122" width="1" height="18" fill="#003c00"/>
<rect x="529" y="140" width="1" height="10" fill="#a80000"/>
<rect x="522" y="150" width="14" height="1" fill="#a80000"/>
<rect x="522" y="154" width="14" height="1" fill="#a80000"/>
<rect x="529" y="155" width="1" height="11" fill="#a80000"/>
<rect x="529" y="166" width="1" height="24" fill="#003c00"/>
<rect x="523" y="189" width="13" height="1" fill="#003c00"/>
<rect x="526" y="192" width="7" height="1" fill="#003c00"/>
<rect x="528" y="195" width="3" height="1" fill="#003c00"/>
<rect x="524" y="163" width="3" height="3" fill="#2828ff"/>
<rect x="486" y="85" width="1" height="7" fill="#003c00"/>
<rect x="486" y="92" width="1" height="9" fill="#a80000"/>
<rect x="475" y="85" width="12" height="1" fill="#003c00"/>
<rect x="486" y="131" width="1" height="10" fill="#a80000"/>
<rect x="486" y="141" width="1" height="12" fill="#003c00"/>
<rect x="468" y="152" width="19" height="1" fill="#003c00"/>
<g stroke="#0000ff" fill="none" stroke-width="1.1" shape-rendering="geometricPrecision"><path d="M470.0 80.5 L475.5 85.5"/><path d="M466.0 79 L468.5 76 L471.0 79 L468.5 81.5 Z"/></g>
<rect x="475" y="80" width="12" height="1" fill="#0000ff"/>
<rect x="475" y="82" width="12" height="1" fill="#0000ff"/>
<g stroke="#0000ff" fill="none" stroke-width="1.1" shape-rendering="geometricPrecision"><path d="M463.0 147.5 L468.5 152.5"/><path d="M459.0 146 L461.5 143 L464.0 146 L461.5 148.5 Z"/></g>
<rect x="468" y="147" width="13" height="1" fill="#0000ff"/>
<rect x="468" y="149" width="13" height="1" fill="#0000ff"/>
<rect x="583" y="430" width="1" height="3" fill="#003c00"/>
<rect x="583" y="432" width="38" height="1" fill="#003c00"/>
<rect x="620" y="432" width="1" height="13" fill="#003c00"/>
<rect x="614" y="444" width="13" height="1" fill="#003c00"/>
<rect x="617" y="447" width="7" height="1" fill="#003c00"/>
<rect x="619" y="450" width="3" height="1" fill="#003c00"/>
<rect x="888" y="431" width="1" height="103" fill="#0000c8"/>
</g>
<g filter="url(#crisp)"><text x="78" y="416" font-size="5" fill="#000" font-weight="bold" text-anchor="start" >AT89C52</text>
<text x="66" y="249" font-size="5" fill="#000" font-weight="bold" text-anchor="start" >19</text>
<text x="81" y="252" font-size="5" fill="#000" font-weight="bold" text-anchor="start" >XTAL1</text>
<text x="66" y="267" font-size="5" fill="#000" font-weight="bold" text-anchor="start" >18</text>
<text x="81" y="270" font-size="5" fill="#000" font-weight="bold" text-anchor="start" >XTAL2</text>
<text x="66" y="291" font-size="5" fill="#000" font-weight="bold" text-anchor="start" >9</text>
<text x="81" y="294" font-size="5" fill="#000" font-weight="bold" text-anchor="start" >RST</text>
<text x="66" y="321" font-size="5" fill="#000" font-weight="bold" text-anchor="start" >29</text>
<text x="81" y="324" font-size="5" fill="#000" font-weight="bold" text-anchor="start" >PSEN</text>
<text x="66" y="327" font-size="5" fill="#000" font-weight="bold" text-anchor="start" >30</text>
<text x="81" y="330" font-size="5" fill="#000" font-weight="bold" text-anchor="start" >ALE</text>
<text x="66" y="333" font-size="5" fill="#000" font-weight="bold" text-anchor="start" >31</text>
<text x="81" y="336" font-size="5" fill="#000" font-weight="bold" text-anchor="start" >EA</text>
<text x="66" y="358" font-size="5" fill="#000" font-weight="bold" text-anchor="start" >1</text>
<text x="81" y="361" font-size="5" fill="#000" font-weight="bold" text-anchor="start" >P1.0/T2</text>
<text x="66" y="364" font-size="5" fill="#000" font-weight="bold" text-anchor="start" >2</text>
<text x="81" y="367" font-size="5" fill="#000" font-weight="bold" text-anchor="start" >P1.1/T2EX</text>
<text x="66" y="370" font-size="5" fill="#000" font-weight="bold" text-anchor="start" >3</text>
<text x="81" y="373" font-size="5" fill="#000" font-weight="bold" text-anchor="start" >P1.2</text>
<text x="66" y="376" font-size="5" fill="#000" font-weight="bold" text-anchor="start" >4</text>
<text x="81" y="379" font-size="5" fill="#000" font-weight="bold" text-anchor="start" >P1.3</text>
<text x="66" y="382" font-size="5" fill="#000" font-weight="bold" text-anchor="start" >5</text>
<text x="81" y="385" font-size="5" fill="#000" font-weight="bold" text-anchor="start" >P1.4</text>
<text x="66" y="388" font-size="5" fill="#000" font-weight="bold" text-anchor="start" >6</text>
<text x="81" y="391" font-size="5" fill="#000" font-weight="bold" text-anchor="start" >P1.5</text>
<text x="66" y="394" font-size="5" fill="#000" font-weight="bold" text-anchor="start" >7</text>
<text x="81" y="397" font-size="5" fill="#000" font-weight="bold" text-anchor="start" >P1.6</text>
<text x="66" y="400" font-size="5" fill="#000" font-weight="bold" text-anchor="start" >8</text>
<text x="81" y="403" font-size="5" fill="#000" font-weight="bold" text-anchor="start" >P1.7</text>
<text x="170" y="249" font-size="5" fill="#000" font-weight="bold" text-anchor="start" >39</text>
<text x="161" y="252" font-size="5" fill="#000" font-weight="bold" text-anchor="end" >P0.0/AD0</text>
<text x="170" y="255" font-size="5" fill="#000" font-weight="bold" text-anchor="start" >38</text>
<text x="161" y="258" font-size="5" fill="#000" font-weight="bold" text-anchor="end" >P0.1/AD1</text>
<text x="170" y="261" font-size="5" fill="#000" font-weight="bold" text-anchor="start" >37</text>
<text x="161" y="264" font-size="5" fill="#000" font-weight="bold" text-anchor="end" >P0.2/AD2</text>
<text x="170" y="267" font-size="5" fill="#000" font-weight="bold" text-anchor="start" >36</text>
<text x="161" y="270" font-size="5" fill="#000" font-weight="bold" text-anchor="end" >P0.3/AD3</text>
<text x="170" y="273" font-size="5" fill="#000" font-weight="bold" text-anchor="start" >35</text>
<text x="161" y="276" font-size="5" fill="#000" font-weight="bold" text-anchor="end" >P0.4/AD4</text>
<text x="170" y="279" font-size="5" fill="#000" font-weight="bold" text-anchor="start" >34</text>
<text x="161" y="282" font-size="5" fill="#000" font-weight="bold" text-anchor="end" >P0.5/AD5</text>
<text x="170" y="285" font-size="5" fill="#000" font-weight="bold" text-anchor="start" >33</text>
<text x="161" y="288" font-size="5" fill="#000" font-weight="bold" text-anchor="end" >P0.6/AD6</text>
<text x="170" y="291" font-size="5" fill="#000" font-weight="bold" text-anchor="start" >32</text>
<text x="161" y="294" font-size="5" fill="#000" font-weight="bold" text-anchor="end" >P0.7/AD7</text>
<text x="170" y="303" font-size="5" fill="#000" font-weight="bold" text-anchor="start" >21</text>
<text x="161" y="306" font-size="5" fill="#000" font-weight="bold" text-anchor="end" >P2.0/A8</text>
<text x="170" y="309" font-size="5" fill="#000" font-weight="bold" text-anchor="start" >22</text>
<text x="161" y="312" font-size="5" fill="#000" font-weight="bold" text-anchor="end" >P2.1/A9</text>
<text x="170" y="315" font-size="5" fill="#000" font-weight="bold" text-anchor="start" >23</text>
<text x="161" y="318" font-size="5" fill="#000" font-weight="bold" text-anchor="end" >P2.2/A10</text>
<text x="170" y="321" font-size="5" fill="#000" font-weight="bold" text-anchor="start" >24</text>
<text x="161" y="324" font-size="5" fill="#000" font-weight="bold" text-anchor="end" >P2.3/A11</text>
<text x="170" y="327" font-size="5" fill="#000" font-weight="bold" text-anchor="start" >25</text>
<text x="161" y="330" font-size="5" fill="#000" font-weight="bold" text-anchor="end" >P2.4/A12</text>
<text x="170" y="333" font-size="5" fill="#000" font-weight="bold" text-anchor="start" >26</text>
<text x="161" y="336" font-size="5" fill="#000" font-weight="bold" text-anchor="end" >P2.5/A13</text>
<text x="170" y="339" font-size="5" fill="#000" font-weight="bold" text-anchor="start" >27</text>
<text x="161" y="342" font-size="5" fill="#000" font-weight="bold" text-anchor="end" >P2.6/A14</text>
<text x="170" y="346" font-size="5" fill="#000" font-weight="bold" text-anchor="start" >28</text>
<text x="161" y="349" font-size="5" fill="#000" font-weight="bold" text-anchor="end" >P2.7/A15</text>
<text x="170" y="358" font-size="5" fill="#000" font-weight="bold" text-anchor="start" >10</text>
<text x="161" y="361" font-size="5" fill="#000" font-weight="bold" text-anchor="end" >P3.0/RXD</text>
<text x="170" y="364" font-size="5" fill="#000" font-weight="bold" text-anchor="start" >11</text>
<text x="161" y="367" font-size="5" fill="#000" font-weight="bold" text-anchor="end" >P3.1/TXD</text>
<text x="170" y="370" font-size="5" fill="#000" font-weight="bold" text-anchor="start" >12</text>
<text x="161" y="373" font-size="5" fill="#000" font-weight="bold" text-anchor="end" >P3.2/INT0</text>
<text x="170" y="376" font-size="5" fill="#000" font-weight="bold" text-anchor="start" >13</text>
<text x="161" y="379" font-size="5" fill="#000" font-weight="bold" text-anchor="end" >P3.3/INT1</text>
<text x="170" y="382" font-size="5" fill="#000" font-weight="bold" text-anchor="start" >14</text>
<text x="161" y="385" font-size="5" fill="#000" font-weight="bold" text-anchor="end" >P3.4/T0</text>
<text x="170" y="388" font-size="5" fill="#000" font-weight="bold" text-anchor="start" >15</text>
<text x="161" y="391" font-size="5" fill="#000" font-weight="bold" text-anchor="end" >P3.5/T1</text>
<text x="170" y="394" font-size="5" fill="#000" font-weight="bold" text-anchor="start" >16</text>
<text x="161" y="397" font-size="5" fill="#000" font-weight="bold" text-anchor="end" >P3.6/WR</text>
<text x="170" y="400" font-size="5" fill="#000" font-weight="bold" text-anchor="start" >17</text>
<text x="161" y="403" font-size="5" fill="#000" font-weight="bold" text-anchor="end" >P3.7/RD</text>
<text x="169" y="191" font-size="5" fill="#000" font-weight="bold" text-anchor="start" >RESPACK-8</text>
<text x="255" y="139" font-size="5" fill="#000" font-weight="bold" text-anchor="start" >LM016L</text>
<text font-size="5" font-weight="bold" transform="translate(269,186) rotate(-90)">VSS</text>
<text font-size="5" font-weight="bold" transform="translate(275,186) rotate(-90)">VDD</text>
<text font-size="5" font-weight="bold" transform="translate(281,186) rotate(-90)">VEE</text>
<text font-size="5" font-weight="bold" transform="translate(294,186) rotate(-90)">RS</text>
<text font-size="5" font-weight="bold" transform="translate(300,186) rotate(-90)">RW</text>
<text font-size="5" font-weight="bold" transform="translate(306,186) rotate(-90)">E</text>
<text font-size="5" font-weight="bold" transform="translate(318,186) rotate(-90)">D0</text>
<text font-size="5" font-weight="bold" transform="translate(324,186) rotate(-90)">D1</text>
<text font-size="5" font-weight="bold" transform="translate(330,186) rotate(-90)">D2</text>
<text font-size="5" font-weight="bold" transform="translate(336,186) rotate(-90)">D3</text>
<text font-size="5" font-weight="bold" transform="translate(342,186) rotate(-90)">D4</text>
<text font-size="5" font-weight="bold" transform="translate(349,186) rotate(-90)">D5</text>
<text font-size="5" font-weight="bold" transform="translate(355,186) rotate(-90)">D6</text>
<text font-size="5" font-weight="bold" transform="translate(361,186) rotate(-90)">D7</text>
<text font-size="5" font-weight="bold" transform="translate(290,208) rotate(-90)">RS</text>
<text font-size="5" font-weight="bold" transform="translate(296,208) rotate(-90)">RW</text>
<text font-size="5" font-weight="bold" transform="translate(302,208) rotate(-90)">E</text>
<text x="188" y="315.5" font-size="6" fill="#000" font-weight="bold" text-anchor="start" >RS</text>
<text x="188" y="321.5" font-size="6" fill="#000" font-weight="bold" text-anchor="start" >RW</text>
<text x="193" y="327.5" font-size="6" fill="#000" font-weight="bold" text-anchor="start" >E</text>
<text x="194" y="382" font-size="6" fill="#000" font-weight="bold" text-anchor="start" >CS</text>
<text x="194" y="388" font-size="6" fill="#000" font-weight="bold" text-anchor="start" >CLK</text>
<text x="194" y="394" font-size="6" fill="#000" font-weight="bold" text-anchor="start" >DO</text>
<text x="267" y="377" font-size="5" fill="#000" font-weight="bold" text-anchor="start" >ADC0832</text>
<text x="270" y="350" font-size="6" fill="#000" font-weight="bold" text-anchor="start" >DO</text>
<text x="258" y="346" font-size="5" fill="#000" font-weight="bold" text-anchor="start" >6</text>
<text x="270" y="356" font-size="6" fill="#000" font-weight="bold" text-anchor="start" >DI</text>
<text x="258" y="352" font-size="5" fill="#000" font-weight="bold" text-anchor="start" >5</text>
<text x="270" y="362" font-size="6" fill="#000" font-weight="bold" text-anchor="start" >CLK</text>
<text x="258" y="358" font-size="5" fill="#000" font-weight="bold" text-anchor="start" >7</text>
<text x="270" y="368" font-size="6" fill="#000" font-weight="bold" text-anchor="start" >VCC</text>
<text x="258" y="364" font-size="5" fill="#000" font-weight="bold" text-anchor="start" >8</text>
<text x="307" y="350" font-size="6" fill="#000" font-weight="bold" text-anchor="end" >GND</text>
<text x="316" y="346" font-size="5" fill="#000" font-weight="bold" text-anchor="start" >4</text>
<text x="307" y="356" font-size="6" fill="#000" font-weight="bold" text-anchor="end" >CH1</text>
<text x="316" y="352" font-size="5" fill="#000" font-weight="bold" text-anchor="start" >3</text>
<text x="307" y="362" font-size="6" fill="#000" font-weight="bold" text-anchor="end" >CH0</text>
<text x="316" y="358" font-size="5" fill="#000" font-weight="bold" text-anchor="start" >2</text>
<text x="307" y="368" font-size="6" fill="#000" font-weight="bold" text-anchor="end" >CS</text>
<text x="316" y="364" font-size="5" fill="#000" font-weight="bold" text-anchor="start" >1</text>
<text x="218" y="345" font-size="6" fill="#000" font-weight="bold" text-anchor="start" >DO</text>
<text x="237" y="357" font-size="6" fill="#000" font-weight="bold" text-anchor="start" >CLK</text>
<text x="353" y="356" font-size="5" fill="#000" font-weight="bold" text-anchor="start" >CH1</text>
<text x="340" y="363" font-size="6" fill="#000" font-weight="bold" text-anchor="start" >CS</text>
<text x="404" y="270" font-size="5" fill="#000" font-weight="bold" text-anchor="start" >0.1u</text>
<text x="432" y="270" font-size="5" fill="#000" font-weight="bold" text-anchor="start" >10k</text>
<text x="449" y="308" font-size="5" fill="#000" font-weight="bold" text-anchor="start" >0.1u</text>
<text x="486" y="306" font-size="5" fill="#000" font-weight="bold" text-anchor="start" >10k</text>
<text x="406" y="309.5" font-size="5.5" fill="#0000ff" font-weight="bold" text-anchor="start" >U4(V+)</text>
<text x="401" y="370" font-size="5.5" fill="#0000ff" font-weight="bold" text-anchor="start" >U4(V-)</text>
<text x="437" y="338" font-size="5" fill="#000" font-weight="bold" text-anchor="start" >3</text>
<text x="434" y="351" font-size="5" fill="#000" font-weight="bold" text-anchor="start" >2</text>
<text x="475" y="345" font-size="5" fill="#000" font-weight="bold" text-anchor="start" >1</text>
<text x="444" y="328" font-size="5" fill="#000" font-weight="bold" text-anchor="start" >8</text>
<text x="445" y="368" font-size="5" fill="#000" font-weight="bold" text-anchor="start" >4</text>
<text x="378" y="391" font-size="5" fill="#000" font-weight="bold" text-anchor="start" >10k</text>
<text x="467" y="373" font-size="5" fill="#000" font-weight="bold" text-anchor="start" textLength="16" lengthAdjust="spacingAndGlyphs">100k</text>
<text x="443" y="78" font-size="5.5" fill="#0000ff" font-weight="bold" text-anchor="start" >U3(V+)</text>
<text x="436" y="145" font-size="5.5" fill="#0000ff" font-weight="bold" text-anchor="start" >U3(V-)</text>
<text x="492" y="143" font-size="5" fill="#000" font-weight="bold" text-anchor="start" >LM358</text>
<text x="498" y="108" font-size="5" fill="#000" font-weight="bold" text-anchor="start" >2</text>
<text x="498" y="120" font-size="5" fill="#000" font-weight="bold" text-anchor="start" >3</text>
<text x="459" y="115" font-size="5" fill="#000" font-weight="bold" text-anchor="start" >1</text>
<text x="481" y="97" font-size="5" fill="#000" font-weight="bold" text-anchor="start" >8</text>
<text x="482" y="137" font-size="5" fill="#000" font-weight="bold" text-anchor="start" >4</text>
<text x="443" y="114" font-size="5" fill="#000" font-weight="bold" text-anchor="start" >A1</text></g>
<g filter="url(#crisp2)"><text x="79" y="243" font-size="8.4" fill="#000" font-weight="normal" text-anchor="start" >U1</text>
<text x="170" y="185" font-size="8.4" fill="#000" font-weight="normal" text-anchor="start" >RP1</text>
<text x="255" y="132" font-size="8.4" fill="#000" font-weight="normal" text-anchor="start" >LCD1</text>
<text x="267" y="339" font-size="8.4" fill="#000" font-weight="normal" text-anchor="start" >U2</text>
<text x="404" y="264" font-size="8.4" fill="#000" font-weight="normal" text-anchor="start" >C2</text>
<text x="432" y="264" font-size="8.4" fill="#000" font-weight="normal" text-anchor="start" >R2</text>
<text x="449" y="292" font-size="8.4" fill="#000" font-weight="normal" text-anchor="start" >C3</text>
<text x="486" y="295" font-size="8.4" fill="#000" font-weight="normal" text-anchor="start" >R3</text>
<text x="468" y="326" font-size="8.4" fill="#000" font-weight="normal" text-anchor="start" >U4:A</text>
<text x="378" y="381" font-size="8.4" fill="#000" font-weight="normal" text-anchor="start" >R4</text>
<text x="467" y="367" font-size="8.4" fill="#000" font-weight="normal" text-anchor="start" >RV1</text>
<text x="492" y="95" font-size="8.4" fill="#000" font-weight="normal" text-anchor="start" >U3:A</text></g>
<defs><filter id="wsh" x="-20%" y="-20%" width="140%" height="140%"><feGaussianBlur stdDeviation="0.8"/></filter></defs>
<g transform="translate(1.2,1.2)" fill="#9a9a9a" stroke="#9a9a9a" filter="url(#wsh)" opacity="0.8">
<circle cx="819.3" cy="508.1" r="17.7" stroke="none"/>
<path d="M811 492 Q826 490 827 481 Q833 493 826 499 Z" stroke="none"/>
</g>
<g fill="#f6f6f6">
<circle cx="819.3" cy="508.1" r="17.7"/>
<path d="M811 492 Q826 490 827 481 Q833 493 826 499 Z"/>
</g>
<g stroke="#8a8a8a" stroke-width="1" fill="none" shape-rendering="geometricPrecision">
<path d="M810.5 505.5 L822 496.5 Q825 494 828 495"/>
<path d="M827.5 509 L813 520.5 L806 521"/>
<circle cx="808.8" cy="507" r="2" fill="#f6f6f6"/><circle cx="829.2" cy="507" r="2" fill="#f6f6f6"/></g>
<g filter="url(#wsh)" opacity="0.7">
<text x="843" y="521.5" font-size="9.5" font-family="Liberation Sans" fill="#909090" font-weight="bold" textLength="98" lengthAdjust="spacingAndGlyphs">www.elecfans.com</text>
<g stroke="#909090" stroke-width="2" fill="none" stroke-linecap="round" transform="translate(1,1)">
<path d="M845 495 h10 v10 h-10 z M850 492 v16 q0 2 4 2 h3 M845 500 h10"/>
<path d="M861 494 h12 l-6 5 v9 q0 3 -4 2 M860 500 h15"/>
<path d="M880 494 l-2 6 h13 M884 492 l-3 10 q4 4 10 6 M890 500 q-3 6 -9 8 M888 493 l3 2"/>
<path d="M896 496 l3 -2 M895 500 h5 M898 497 v12 M902 496 h8 M905 493 v6 q0 4 -4 6 M907 499 v8 h3 M901 503 l4 -1"/>
<path d="M914 495 h12 M919 492 q-1 10 -6 16 M918 500 h8 q-3 7 -9 8 M920 503 l8 6"/>
</g></g>
<text x="842" y="520.5" font-size="9.5" font-family="Liberation Sans" fill="#f4f4f4" font-weight="bold" textLength="98" lengthAdjust="spacingAndGlyphs">www.elecfans.com</text>
<g stroke="#f4f4f4" stroke-width="2" fill="none" stroke-linecap="round">
<path d="M845 495 h10 v10 h-10 z M850 492 v16 q0 2 4 2 h3 M845 500 h10"/>
<path d="M861 494 h12 l-6 5 v9 q0 3 -4 2 M860 500 h15"/>
<path d="M880 494 l-2 6 h13 M884 492 l-3 10 q4 4 10 6 M890 500 q-3 6 -9 8 M888 493 l3 2"/>
<path d="M896 496 l3 -2 M895 500 h5 M898 497 v12 M902 496 h8 M905 493 v6 q0 4 -4 6 M907 499 v8 h3 M901 503 l4 -1"/>
<path d="M914 495 h12 M919 492 q-1 10 -6 16 M918 500 h8 q-3 7 -9 8 M920 503 l8 6"/>
</g>
<g shape-rendering="crispEdges">
<rect x="534" y="0" width="415" height="431" fill="#6b9bd2"/>
<rect x="540" y="0" width="409" height="3" fill="#9999ff"/>
<rect x="553" y="0" width="4" height="1" fill="#e0e0ff"/>
<rect x="534" y="428" width="415" height="3" fill="#6868d0"/>
<rect x="537" y="4" width="412" height="424" fill="#e8e8e8"/>
<rect x="538" y="5" width="406" height="423" fill="#000"/>
<rect x="539" y="6" width="403" height="403" fill="#a8a8a8"/>
<rect x="540" y="7" width="401" height="401" fill="#000"/>
<rect x="944" y="5" width="5" height="423" fill="#d8d8d8"/>
<rect x="946" y="5" width="3" height="423" fill="#a0a0a0"/>
<rect x="943" y="5" width="1" height="423" fill="#000"/>
<rect x="941" y="7" width="2" height="403" fill="#c8c8c8"/>
<rect x="946" y="391" width="3" height="37" fill="#f0f0f0"/>
<rect x="947" y="391" width="1" height="37" fill="#804040"/>
<rect x="944" y="30" width="5" height="1" fill="#000"/>
<rect x="944" y="215" width="5" height="1" fill="#000"/>
<rect x="540" y="7" width="1" height="401" fill="#003300"/>
<rect x="540" y="7" width="401" height="1" fill="#003300"/>
<rect x="560" y="7" width="1" height="401" fill="#003300"/>
<rect x="540" y="27" width="401" height="1" fill="#003300"/>
<rect x="580" y="7" width="1" height="401" fill="#003300"/>
<rect x="540" y="47" width="401" height="1" fill="#003300"/>
<rect x="600" y="7" width="1" height="401" fill="#003300"/>
<rect x="540" y="67" width="401" height="1" fill="#003300"/>
<rect x="620" y="7" width="1" height="401" fill="#003300"/>
<rect x="540" y="87" width="401" height="1" fill="#003300"/>
<rect x="640" y="7" width="1" height="401" fill="#003300"/>
<rect x="540" y="107" width="401" height="1" fill="#003300"/>
<rect x="660" y="7" width="1" height="401" fill="#003300"/>
<rect x="540" y="127" width="401" height="1" fill="#003300"/>
<rect x="680" y="7" width="1" height="401" fill="#003300"/>
<rect x="540" y="147" width="401" height="1" fill="#003300"/>
<rect x="700" y="7" width="1" height="401" fill="#003300"/>
<rect x="540" y="167" width="401" height="1" fill="#003300"/>
<rect x="720" y="7" width="1" height="401" fill="#003300"/>
<rect x="540" y="187" width="401" height="1" fill="#003300"/>
<rect x="740" y="7" width="1" height="401" fill="#003300"/>
<rect x="540" y="207" width="401" height="1" fill="#003300"/>
<rect x="760" y="7" width="1" height="401" fill="#003300"/>
<rect x="540" y="227" width="401" height="1" fill="#003300"/>
<rect x="780" y="7" width="1" height="401" fill="#003300"/>
<rect x="540" y="247" width="401" height="1" fill="#003300"/>
<rect x="800" y="7" width="1" height="401" fill="#003300"/>
<rect x="540" y="267" width="401" height="1" fill="#003300"/>
<rect x="820" y="7" width="1" height="401" fill="#003300"/>
<rect x="540" y="287" width="401" height="1" fill="#003300"/>
<rect x="840" y="7" width="1" height="401" fill="#003300"/>
<rect x="540" y="307" width="401" height="1" fill="#003300"/>
<rect x="860" y="7" width="1" height="401" fill="#003300"/>
<rect x="540" y="327" width="401" height="1" fill="#003300"/>
<rect x="880" y="7" width="1" height="401" fill="#003300"/>
<rect x="540" y="347" width="401" height="1" fill="#003300"/>
<rect x="900" y="7" width="1" height="401" fill="#003300"/>
<rect x="540" y="367" width="401" height="1" fill="#003300"/>
<rect x="920" y="7" width="1" height="401" fill="#003300"/>
<rect x="540" y="387" width="401" height="1" fill="#003300"/>
<rect x="940" y="7" width="1" height="401" fill="#003300"/>
<rect x="540" y="407" width="401" height="1" fill="#003300"/>
<rect x="740" y="7" width="1" height="3" fill="#c0c0c0"/>
<rect x="740" y="13" width="1" height="3" fill="#c0c0c0"/>
<rect x="740" y="19" width="1" height="3" fill="#c0c0c0"/>
<rect x="740" y="25" width="1" height="3" fill="#c0c0c0"/>
<rect x="740" y="31" width="1" height="3" fill="#c0c0c0"/>
<rect x="740" y="37" width="1" height="3" fill="#c0c0c0"/>
<rect x="740" y="43" width="1" height="3" fill="#c0c0c0"/>
<rect x="740" y="49" width="1" height="3" fill="#c0c0c0"/>
<rect x="740" y="55" width="1" height="3" fill="#c0c0c0"/>
<rect x="740" y="61" width="1" height="3" fill="#c0c0c0"/>
<rect x="740" y="67" width="1" height="3" fill="#c0c0c0"/>
<rect x="740" y="73" width="1" height="3" fill="#c0c0c0"/>
<rect x="740" y="79" width="1" height="3" fill="#c0c0c0"/>
<rect x="740" y="85" width="1" height="3" fill="#c0c0c0"/>
<rect x="740" y="91" width="1" height="3" fill="#c0c0c0"/>
<rect x="740" y="97" width="1" height="3" fill="#c0c0c0"/>
<rect x="740" y="103" width="1" height="3" fill="#c0c0c0"/>
<rect x="740" y="109" width="1" height="3" fill="#c0c0c0"/>
<rect x="740" y="115" width="1" height="3" fill="#c0c0c0"/>
<rect x="740" y="121" width="1" height="3" fill="#c0c0c0"/>
<rect x="740" y="127" width="1" height="3" fill="#c0c0c0"/>
<rect x="740" y="133" width="1" height="3" fill="#c0c0c0"/>
<rect x="740" y="139" width="1" height="3" fill="#c0c0c0"/>
<rect x="740" y="145" width="1" height="3" fill="#c0c0c0"/>
<rect x="740" y="151" width="1" height="3" fill="#c0c0c0"/>
<rect x="740" y="157" width="1" height="3" fill="#c0c0c0"/>
<rect x="740" y="163" width="1" height="3" fill="#c0c0c0"/>
<rect x="740" y="169" width="1" height="3" fill="#c0c0c0"/>
<rect x="740" y="175" width="1" height="3" fill="#c0c0c0"/>
<rect x="740" y="181" width="1" height="3" fill="#c0c0c0"/>
<rect x="740" y="187" width="1" height="3" fill="#c0c0c0"/>
<rect x="740" y="193" width="1" height="3" fill="#c0c0c0"/>
<rect x="740" y="199" width="1" height="3" fill="#c0c0c0"/>
<rect x="740" y="205" width="1" height="3" fill="#c0c0c0"/>
<rect x="740" y="211" width="1" height="3" fill="#c0c0c0"/>
<rect x="740" y="217" width="1" height="3" fill="#c0c0c0"/>
<rect x="740" y="223" width="1" height="3" fill="#c0c0c0"/>
<rect x="740" y="229" width="1" height="3" fill="#c0c0c0"/>
<rect x="740" y="235" width="1" height="3" fill="#c0c0c0"/>
<rect x="740" y="241" width="1" height="3" fill="#c0c0c0"/>
<rect x="740" y="247" width="1" height="3" fill="#c0c0c0"/>
<rect x="740" y="253" width="1" height="3" fill="#c0c0c0"/>
<rect x="740" y="259" width="1" height="3" fill="#c0c0c0"/>
<rect x="740" y="265" width="1" height="3" fill="#c0c0c0"/>
<rect x="740" y="271" width="1" height="3" fill="#c0c0c0"/>
<rect x="740" y="277" width="1" height="3" fill="#c0c0c0"/>
<rect x="740" y="283" width="1" height="3" fill="#c0c0c0"/>
<rect x="740" y="289" width="1" height="3" fill="#c0c0c0"/>
<rect x="740" y="295" width="1" height="3" fill="#c0c0c0"/>
<rect x="740" y="301" width="1" height="3" fill="#c0c0c0"/>
<rect x="740" y="307" width="1" height="3" fill="#c0c0c0"/>
<rect x="740" y="313" width="1" height="3" fill="#c0c0c0"/>
<rect x="740" y="319" width="1" height="3" fill="#c0c0c0"/>
<rect x="740" y="325" width="1" height="3" fill="#c0c0c0"/>
<rect x="740" y="331" width="1" height="3" fill="#c0c0c0"/>
<rect x="740" y="337" width="1" height="3" fill="#c0c0c0"/>
<rect x="740" y="343" width="1" height="3" fill="#c0c0c0"/>
<rect x="740" y="349" width="1" height="3" fill="#c0c0c0"/>
<rect x="740" y="355" width="1" height="3" fill="#c0c0c0"/>
<rect x="740" y="361" width="1" height="3" fill="#c0c0c0"/>
<rect x="740" y="367" width="1" height="3" fill="#c0c0c0"/>
<rect x="740" y="373" width="1" height="3" fill="#c0c0c0"/>
<rect x="740" y="379" width="1" height="3" fill="#c0c0c0"/>
<rect x="740" y="385" width="1" height="3" fill="#c0c0c0"/>
<rect x="740" y="391" width="1" height="3" fill="#c0c0c0"/>
<rect x="740" y="397" width="1" height="3" fill="#c0c0c0"/>
<rect x="740" y="403" width="1" height="3" fill="#c0c0c0"/>
<rect x="540" y="87" width="401" height="1" fill="#ffff00"/>
<rect x="540" y="237" width="401" height="1" fill="#0096cc"/>
<rect x="538" y="408" width="405" height="1" fill="#b8b8b8"/>
<rect x="538" y="409" width="405" height="1" fill="#e0e0e0"/>
<rect x="538" y="410" width="406" height="1" fill="#000"/>
<rect x="538" y="411" width="405" height="16" fill="#ffffff"/>
<rect x="555" y="411" width="372" height="16" fill="url(#chk)"/>
<rect x="538" y="427" width="406" height="1" fill="#000"/>
<rect x="534" y="428" width="415" height="1" fill="#6b9bd2"/>
<rect x="534" y="429" width="415" height="2" fill="#6060d0"/>
<rect x="538" y="411" width="17" height="16" fill="#404040"/>
<rect x="538" y="411" width="16" height="15" fill="#909090"/>
<rect x="538" y="411" width="15" height="14" fill="#ffffff"/>
<rect x="539" y="412" width="14" height="13" fill="#ffffd0"/>
<rect x="927" y="411" width="16" height="16" fill="#404040"/>
<rect x="927" y="411" width="15" height="15" fill="#909090"/>
<rect x="927" y="411" width="14" height="14" fill="#ffffff"/>
<rect x="928" y="412" width="13" height="13" fill="#ffffd0"/>
<rect x="903" y="411" width="8" height="16" fill="#404040"/>
<rect x="903" y="411" width="7" height="15" fill="#909090"/>
<rect x="903" y="411" width="6" height="14" fill="#ffffff"/>
<rect x="904" y="412" width="5" height="13" fill="#ffffd0"/>
<polygon points="542.5,418.5 547,414.5 547,422.5" fill="#000" shape-rendering="geometricPrecision"/>
<polygon points="936.5,418.5 932,414.5 932,422.5" fill="#000" shape-rendering="geometricPrecision"/>
</g>
</svg></body></html>
